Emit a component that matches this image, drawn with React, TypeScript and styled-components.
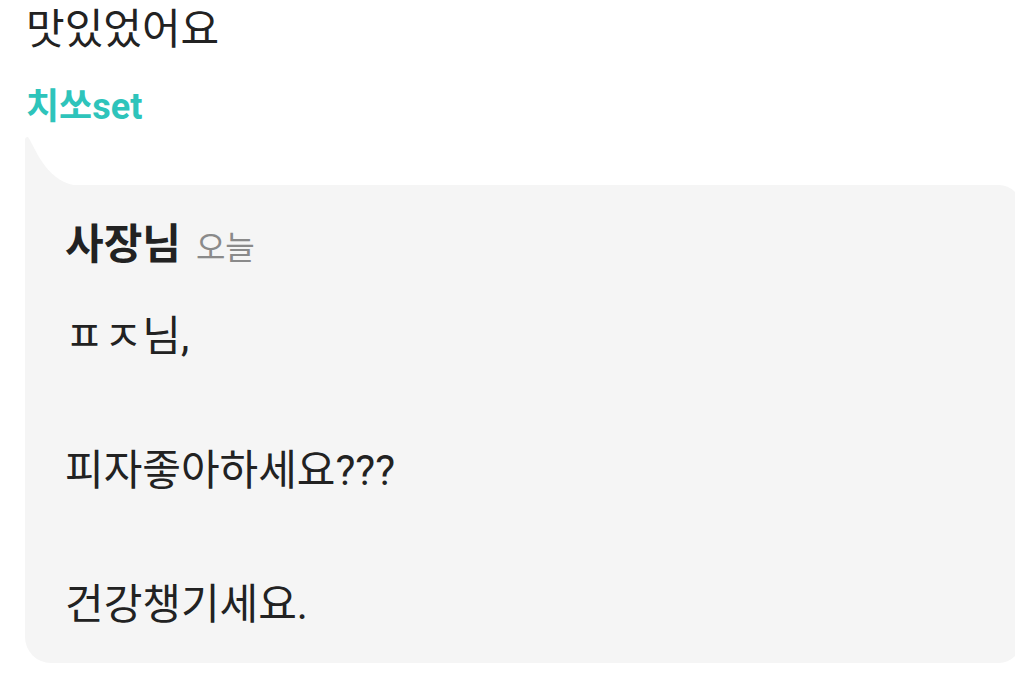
import React from "react";
import styled, { createGlobalStyle } from "styled-components";

const GlobalStyle = createGlobalStyle`
    html, body {
        margin: 0;
        padding: 0;
        background: #ffffff;
        overflow: hidden;
    }
    body {
        font-family: Roboto, "Noto Sans CJK KR", sans-serif;
        color: #222222;
    }
`;

const Page = styled.main`
    padding: 2px 0 0 25px;
    width: 100vw;
    box-sizing: border-box;
`;

const Review = styled.p`
    margin: 0;
    font-size: 42px;
    line-height: 56px;
    padding-left: 1px;
`;

const MenuName = styled.p`
    margin: 27px 0 0;
    padding-left: 1px;
    font-size: 36px;
    line-height: 44px;
    font-weight: 700;
    color: #2ec4bb;
`;

const Bubble = styled.section`
    margin: 8px -6px 0 0;
`;

const Tail = styled.svg`
    display: block;
    width: 56px;
    height: 49px;
    margin-bottom: -1px;
`;

const BubbleBody = styled.div`
    background: #f5f5f5;
    border-radius: 0 22px 22px 26px;
    padding: 36px 40px 25px;
`;

const ReplyHeader = styled.div`
    display: flex;
    align-items: baseline;
    gap: 15px;
    line-height: 48px;
`;

const Author = styled.span`
    font-size: 42px;
    font-weight: 700;
    color: #222222;
`;

const Time = styled.span`
    font-size: 32px;
    color: #8a8a8a;
`;

const ReplyText = styled.p`
    margin: 31px 0 0;
    font-size: 42px;
    line-height: 67px;
    white-space: pre-line;
`;

export default function App() {
    return (
        <>
            <GlobalStyle />
            <Page>
                <Review>맛있었어요</Review>
                <MenuName>치쏘set</MenuName>
                <Bubble>
                    <Tail viewBox="0 0 56 49">
                        <path d="M0 3 Q0 0 3 0 C12 14 22 47 56 49 L56 49 L0 49 Z" fill="#f5f5f5" />
                    </Tail>
                    <BubbleBody>
                        <ReplyHeader>
                            <Author>사장님</Author>
                            <Time>오늘</Time>
                        </ReplyHeader>
                        <ReplyText>{"ㅍㅈ님,\n\n피자좋아하세요???\n\n건강챙기세요."}</ReplyText>
                    </BubbleBody>
                </Bubble>
            </Page>
        </>
    );
}
